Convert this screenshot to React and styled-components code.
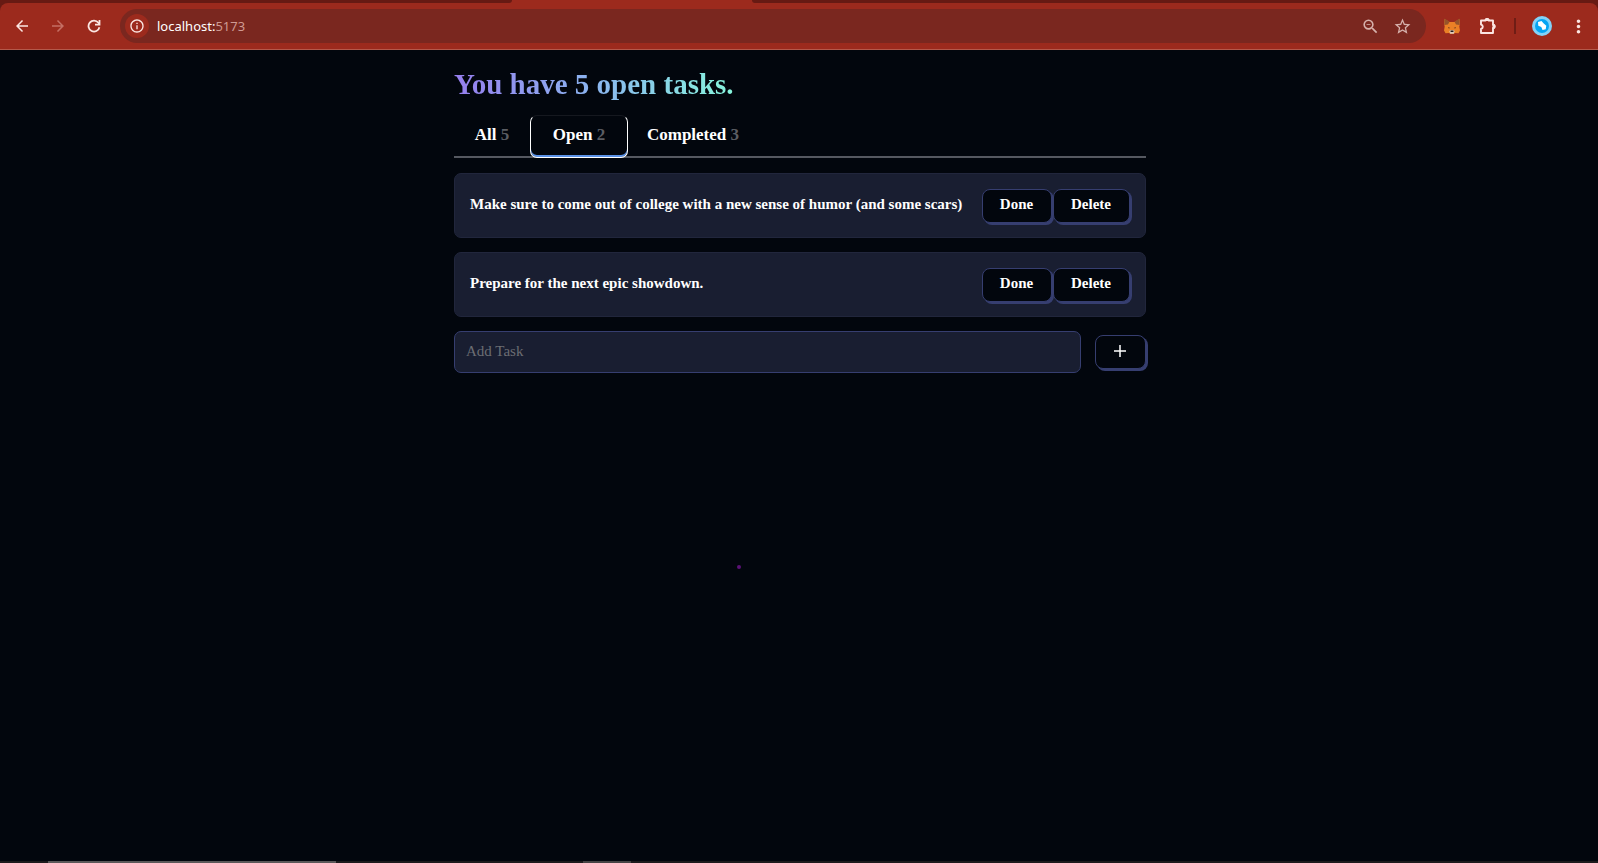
import React, { useState } from "react";
import styled, { createGlobalStyle } from "styled-components";
import {
  MdArrowBack,
  MdArrowForward,
  MdInfoOutline,
  MdZoomOut,
  MdStarBorder,
  MdMoreVert,
} from "react-icons/md";

const GlobalStyle = createGlobalStyle`
  *, *::before, *::after { box-sizing: border-box; }
  body {
    margin: 0;
    background: #02060d;
    color: #fff;
    font-family: "Liberation Serif", serif;
  }
  button, input { font-family: inherit; }
`;

const Screen = styled.div`
  display: flex;
  flex-direction: column;
  min-height: 100vh;
`;

const Browser = styled.header`
  background: #671a13;
`;

const TabStrip = styled.div`
  display: flex;
  height: 3px;
  background: #9c2a1d;
`;

const StripSide = styled.div`
  flex: ${(p) => p.$grow};
  background: #671a13;
  border-radius: ${(p) => (p.$end ? "0 0 0 8px" : "0 0 8px 0")};
`;

const ActiveTab = styled.div`
  flex: 0 0 240px;
`;

const Toolbar = styled.div`
  display: flex;
  align-items: center;
  height: 47px;
  padding: 0 9px 0 11px;
  background: #9c2a1d;
  border-bottom: 1px solid #b4594b;
  border-radius: 8px 8px 0 0;
`;

const Nav = styled.nav`
  display: flex;
  gap: 14px;
  margin-right: 15px;
`;

const IconButton = styled.button`
  display: flex;
  align-items: center;
  justify-content: center;
  width: ${(p) => p.$size || 22}px;
  height: ${(p) => p.$size || 22}px;
  padding: 0;
  border: 0;
  border-radius: 50%;
  background: ${(p) => p.$fill || "none"};
  color: ${(p) => p.$tone || "#fbe6e2"};
`;

const AddressBar = styled.div`
  display: flex;
  align-items: center;
  flex: 1;
  height: 34px;
  padding: 0 13px 0 5px;
  border-radius: 17px;
  background: #7a271f;
`;

const Address = styled.a`
  flex: 1;
  margin-left: 8px;
  color: #fff;
  font: 13px/20px "Noto Sans", sans-serif;
  text-decoration: none;
`;

const Port = styled.span`
  color: #cf9a93;
`;

const AddressActions = styled.div`
  display: flex;
  gap: 10px;
`;

const Extensions = styled.div`
  display: flex;
  align-items: center;
  gap: 14px;
  margin-left: 15px;
`;

const Divider = styled.span`
  width: 2px;
  height: 16px;
  margin: 0 1px;
  background: #6f1d15;
`;

const Page = styled.main`
  flex: 1;
  position: relative;
  padding: 16px 0 0 2px;
`;

const Column = styled.div`
  width: 100%;
  max-width: 692px;
  margin: 0 auto;
`;

const Title = styled.h1`
  width: fit-content;
  margin: 0 0 13px;
  font-size: 29px;
  line-height: 36px;
  background: linear-gradient(90deg, #967eee, #8bb5f0 50%, #86f5dc);
  background-clip: text;
  color: transparent;
`;

const Tabs = styled.div`
  display: flex;
  border-bottom: 2px solid #555860;
  margin-bottom: 15px;
`;

const Tab = styled.button`
  height: 43px;
  width: ${(p) => p.$width}px;
  margin-bottom: -2px;
  padding: 0 0 3px;
  border: ${(p) => (p.$active ? "1px solid #fff" : "1px solid transparent")};
  border-top-color: ${(p) => (p.$active ? "#15181f" : "transparent")};
  border-radius: 7px;
  background: none;
  box-shadow: ${(p) => (p.$active ? "inset 0 -2px 0 #5b92e8" : "none")};
  color: #fff;
  font-size: 17px;
  font-weight: 700;
  line-height: 24px;
`;

const Count = styled.span`
  color: #5b5d63;
`;

const TaskList = styled.ul`
  display: flex;
  flex-direction: column;
  gap: 14px;
  margin: 0 0 14px;
  padding: 0;
  list-style: none;
`;

const Task = styled.li`
  display: flex;
  align-items: center;
  justify-content: space-between;
  height: 65px;
  padding: 0 15px;
  border: 1px solid #21263c;
  border-radius: 7px;
  background: #191e31;
`;

const TaskText = styled.span`
  padding-bottom: 4px;
  font-size: 15px;
  font-weight: 700;
  line-height: 20px;
`;

const TaskActions = styled.div`
  display: flex;
  gap: 1px;
`;

const ActionButton = styled.button`
  display: flex;
  align-items: center;
  justify-content: center;
  width: ${(p) => p.$width}px;
  height: 34px;
  padding: 0 1px 3px 0;
  border: 1px solid #363e70;
  border-radius: 8px;
  background: #02060d;
  box-shadow: 2px 2px 0 #363e70;
  color: #fff;
  font-size: 15px;
  font-weight: 700;
  line-height: 20px;
`;

const AddForm = styled.form`
  display: flex;
  align-items: center;
  gap: 14px;
`;

const TaskInput = styled.input`
  flex: 1;
  min-width: 0;
  height: 42px;
  padding: 0 11px 2px;
  border: 1px solid #363e70;
  border-radius: 7px;
  outline: 0;
  background: #191e31;
  color: #fff;
  font-size: 15px;
  &::placeholder { color: #6b6d73; opacity: 1; }
`;

const Pointer = styled.span`
  position: absolute;
  top: 515px;
  left: calc(50% - 62px);
  width: 4px;
  height: 4px;
  border-radius: 50%;
  background: #5b1276;
`;

const Taskbar = styled.footer`
  display: flex;
  height: 2px;
  padding-left: 48px;
  gap: 247px;
  background: #1c1a1c;
`;

const TaskbarItem = styled.span`
  width: ${(p) => p.$width}px;
  background: ${(p) => p.$tone};
`;

const ReloadIcon = () => (
  <svg width="14" height="14" viewBox="0 0 14 14" fill="none" stroke="currentColor" strokeWidth="1.8">
    <path d="M12.4 8.2A5.5 5.5 0 1 1 11.4 3.7L12.4 5" />
    <path d="M12.5 1v4.6H8" />
  </svg>
);

const PuzzleIcon = () => (
  <svg width="20" height="20" viewBox="0 0 20 20">
    <path
      d="M3 4.500h4.500a1.600 1.600 0 0 1 3.200 0H15v4.300a1.600 1.600 0 0 1 0 3.200v5H3v-4c2.400-.8 2.400-3.800 0-4.500z"
      fill="none"
      stroke="currentColor"
      strokeWidth="1.9"
      strokeLinejoin="round"
    />
    <path d="M7 4.500a2.100 2.100 0 0 1 4.200 0zM15 8.300a2.100 2.100 0 0 1 0 4.200z" fill="currentColor" stroke="currentColor" />
  </svg>
);

const FoxIcon = () => (
  <svg width="18" height="18" viewBox="0 0 18 18">
    <path d="M1.500 2 6.500 5h5l5-3 .4 5-.6 2.500 .7 4-1.500 2.800-3.300-.4-1.900 1.100H7.700l-1.900-1.100-3.300.4L1 13.500l.7-4L1.100 7z" fill="#ea8026" />
    <path d="M1.500 1.500 6.500 4.800 5 7.500 1.300 8zM16.500 1.500 11.500 4.800 13 7.500l3.700.5z" fill="#96532a" />
    <path d="M5 10l2.300 1-1.600.5zM13 10l-2.300 1 1.600.5z" fill="#5a3220" />
    <path d="M6.300 14 8 13h2l1.700 1-.9 2.700H7.200z" fill="#dcc6b8" />
    <path d="M7.700 13.500h2.600l.2 1.500h-3z" fill="#251c1a" />
  </svg>
);

const ProfileIcon = () => (
  <svg width="20" height="20" viewBox="0 0 20 20">
    <circle cx="10" cy="10" r="10" fill="#83d2f8" />
    <circle cx="10" cy="10" r="7" fill="#05a5f3" />
    <path d="M6 6 9.500 5l2 2.200 2.800 2.600-.6 3.400-3.200.8-1.200-3-3-1.200z" fill="#fff" />
  </svg>
);

const tabs = [
  { name: "All", count: 5, width: 76 },
  { name: "Open", count: 2, width: 98 },
  { name: "Completed", count: 3, width: 130 },
];

const tasks = [
  "Make sure to come out of college with a new sense of humor (and some scars)",
  "Prepare for the next epic showdown.",
];

export default function App() {
  const [active, setActive] = useState("Open");
  const [draft, setDraft] = useState("");

  return (
    <Screen>
      <GlobalStyle />
      <Browser>
        <TabStrip>
          <StripSide $grow="512 1 0" />
          <ActiveTab />
          <StripSide $grow="846 1 0" $end />
        </TabStrip>
        <Toolbar>
          <Nav aria-label="Browser">
            <IconButton aria-label="Back"><MdArrowBack size={18} /></IconButton>
            <IconButton aria-label="Forward" $tone="#c46f64"><MdArrowForward size={18} /></IconButton>
            <IconButton aria-label="Reload"><ReloadIcon /></IconButton>
          </Nav>
          <AddressBar>
            <IconButton aria-label="Site information" $size={24} $fill="#9c2a1d">
              <MdInfoOutline size={16} />
            </IconButton>
            <Address href="#">localhost:<Port>5173</Port></Address>
            <AddressActions>
              <IconButton aria-label="Zoom" $tone="#d6b1ac"><MdZoomOut size={19} /></IconButton>
              <IconButton aria-label="Bookmark" $tone="#d6b1ac"><MdStarBorder size={19} /></IconButton>
            </AddressActions>
          </AddressBar>
          <Extensions>
            <IconButton aria-label="Wallet"><FoxIcon /></IconButton>
            <IconButton aria-label="Extensions"><PuzzleIcon /></IconButton>
            <Divider />
            <IconButton aria-label="Profile"><ProfileIcon /></IconButton>
            <IconButton aria-label="Menu"><MdMoreVert size={21} /></IconButton>
          </Extensions>
        </Toolbar>
      </Browser>

      <Page>
        <Column>
          <Title>You have 5 open tasks.</Title>
          <Tabs role="tablist">
            {tabs.map((t) => (
              <Tab
                key={t.name}
                role="tab"
                aria-selected={active === t.name}
                $active={active === t.name}
                $width={t.width}
                onClick={() => setActive(t.name)}
              >
                {t.name} <Count>{t.count}</Count>
              </Tab>
            ))}
          </Tabs>
          <TaskList>
            {tasks.map((task) => (
              <Task key={task}>
                <TaskText>{task}</TaskText>
                <TaskActions>
                  <ActionButton $width={70}>Done</ActionButton>
                  <ActionButton $width={77}>Delete</ActionButton>
                </TaskActions>
              </Task>
            ))}
          </TaskList>
          <AddForm onSubmit={(e) => e.preventDefault()}>
            <TaskInput
              aria-label="Add Task"
              placeholder="Add Task"
              value={draft}
              onChange={(e) => setDraft(e.target.value)}
            />
            <ActionButton $width={51} aria-label="Add">
              <svg width="12" height="12" viewBox="0 0 12 12" stroke="#fff" strokeWidth="1.500">
                <path d="M6 0v12M0 6h12" />
              </svg>
            </ActionButton>
          </AddForm>
        </Column>
        <Pointer />
      </Page>

      <Taskbar>
        <TaskbarItem $width={288} $tone="#5a5859" />
        <TaskbarItem $width={48} $tone="#454344" />
      </Taskbar>
    </Screen>
  );
}
